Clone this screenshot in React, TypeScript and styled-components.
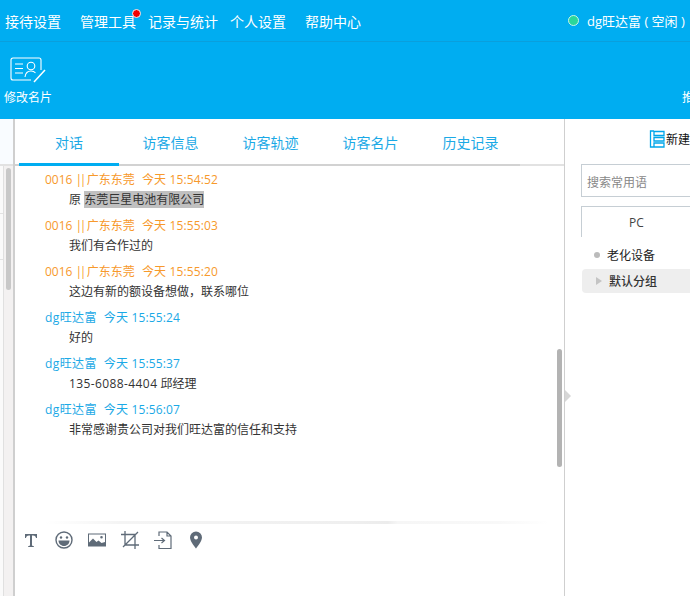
import React from "react";
import styled, { createGlobalStyle } from "styled-components";

const Global = createGlobalStyle`
  html, body { margin: 0; padding: 0; overflow: hidden; background: #fff; }
  body { font-family: "Open Sans", "Noto Sans CJK SC", sans-serif; font-size: 12px; }
  #root { width: 690px; height: 596px; overflow: hidden; }
`;

const Page = styled.div`
  width: 690px; height: 596px; display: flex; flex-direction: column; overflow: hidden;
`;
const TopBar = styled.header`
  height: 41px; flex: none; background: #00adf1; border-bottom: 1px solid #0a9fdc;
  display: flex; align-items: center; justify-content: space-between; padding: 0 0 0 5px; color: #fff; font-size: 14px;
`;
const Nav = styled.nav`display: flex; align-items: center; height: 100%;`;
const NavItem = styled.span<{ $w: number }>`
  position: relative; width: ${p => p.$w}px; white-space: nowrap;
`;
const Dot = styled.i`
  position: absolute; left: 52px; top: -2px; width: 7px; height: 7px; border-radius: 50%; background: #f10000;
  border: 1px solid #eaf6fc;
`;
const User = styled.div`display: flex; align-items: center; gap: 8px; white-space: nowrap; width: 122px; font-size: 13px;`;
const Status = styled.i`
  width: 9px; height: 9px; border-radius: 50%; background: #2bd69a; border: 1px solid #c8f5e8; flex: none;
`;
const Toolbar = styled.div`
  height: 77px; flex: none; background: #00adf1; color: #fff; display: flex; padding-left: 4px; justify-content: space-between; font-size: 12px;
`;
const Tool = styled.div`display: flex; flex-direction: column; align-items: center; width: 48px;`;
const ToolIcon = styled.svg`width: 36px; height: 26px; margin-top: 15px; margin-left: 0;`;
const ToolLabel = styled.span`margin-top: 6px; line-height: 17px; white-space: nowrap;`;
const EdgeLabel = styled.span`margin-top: 47px; line-height: 17px; width: 8px; overflow: hidden; white-space: nowrap;`;
const Body = styled.div`flex: 1; display: flex; min-height: 0; position: relative;`;
const Rail = styled.div`
  width: 13px; flex: none; background: #f3f1f1; border-right: 2px solid #cfcfcf; display: flex; flex-direction: column; position: relative;
`;
const RailHead = styled.div`height: 45px; flex: none; background: #f9fcff; border-bottom: 2px solid #e2e2e2;`;
const RailColumn = styled.div`
  width: 3px; flex: 1; background: #fafafa; border-right: 1px solid #e0e0e0; display: flex; flex-direction: column;
`;
const RailRow = styled.div<{ $h: number }>`height: ${p => p.$h}px; flex: none; border-bottom: 1px solid #e2e2e2;`;
const RailThumb = styled.div`
  position: absolute; left: 6px; top: 49px; width: 5px; height: 122px; background: #c8c8c8; border-radius: 3px;
`;
const Center = styled.div`flex: 1; min-width: 0; display: flex; flex-direction: column; position: relative;`;
const Tabs = styled.div`
  height: 45px; flex: none; display: flex; padding-left: 4px; border-bottom: 2px solid #d2d2d2;
  border-image: linear-gradient(90deg, #d2d2d2 504px, #e2e2e2 504px) 1;
`;
const Tab = styled.div<{ $active?: boolean }>`
  width: 100px; height: 47px; box-sizing: border-box; text-align: center; line-height: 47px; font-size: 14px; color: #1ba9e6;
  padding-left: ${p => (p.$active ? 0 : 3)}px;
  border-bottom: 3px solid ${p => (p.$active ? "#00adf1" : "transparent")};
`;
const Messages = styled.div`height: 350px; flex: none; padding: 5px 0 0 30px; position: relative; overflow: hidden;`;
const Msg = styled.div`height: 46px;`;
const Meta = styled.div<{ $me?: boolean }>`
  display: flex; gap: 7px; line-height: 18px; font-size: 12px; color: ${p => (p.$me ? "#1ba9e6" : "#f7992c")}; white-space: pre;
`;
const Who = styled.span<{ $me?: boolean }>`letter-spacing: ${p => (p.$me ? 0.4 : 0)}px;`;
const Pipes = styled.span`letter-spacing: -2.5px;`;
const Stamp = styled.span`letter-spacing: 0.15px;`;
const Text = styled.div`line-height: 22px; padding-left: 24px; font-size: 12px; color: #333; white-space: pre;`;
const Selected = styled.span`background: #c0c0c0;`;
const Phone = styled.span`letter-spacing: 0.4px;`;
const Thumb = styled.div`
  position: absolute; right: 2px; top: 183px; width: 5px; height: 118px; background: #b3b3b3; border-radius: 3px;
`;
const Divider = styled.div`
  margin: 0 15px 0 30px; height: 3px; flex: none;
  background: linear-gradient(90deg, #fff 0, #f4f4f4 15%, #efefef 60%, #ececec 68%, #f6f6f6 70%, #f8f8f8 90%, #fff 100%);
`;
const Icons = styled.div`display: flex; align-items: center; height: 32px; padding-left: 6px; gap: 13px; flex: none;`;
const IconBox = styled.svg`width: 20px; height: 20px; color: #5f6b78; flex: none;`;
const Right = styled.aside`
  width: 126px; flex: none; border-left: 1px solid #cfcfcf; padding-left: 16px; box-sizing: border-box; overflow: hidden;
`;
const Arrow = styled.i`
  position: absolute; left: 565px; top: 271px; width: 0; height: 0;
  border-left: 6px solid #d6d6d6; border-top: 6px solid transparent; border-bottom: 6px solid transparent;
`;
const NewRow = styled.div`
  height: 45px; display: flex; align-items: center; gap: 1px; padding-left: 68px; padding-bottom: 5px; box-sizing: border-box; white-space: nowrap; color: #111;
`;
const Search = styled.div`
  width: 130px; height: 33px; border: 1px solid #c6ced4; box-sizing: border-box; color: #888; padding-left: 5px; line-height: 35px; margin-bottom: 9px; white-space: nowrap;
`;
const PcTab = styled.div`
  width: 130px; height: 31px; border: 1px solid #c6ced4; border-bottom: 0; box-sizing: border-box; text-align: center; padding-right: 19px; line-height: 32px; color: #444; margin-bottom: 4px;
`;
const Group = styled.div`
  height: 28px; display: flex; align-items: center; gap: 7px; padding-left: 13px; color: #222; white-space: nowrap; box-sizing: border-box;
`;
const Bullet = styled.i`width: 6px; height: 6px; border-radius: 50%; background: #bbb; flex: none;`;
const GroupOpen = styled.div`
  width: 130px; height: 24px; background: #eee; border-radius: 4px; margin-left: 1px; display: flex; align-items: center; gap: 7px; padding-left: 14px; color: #333; font-weight: 500; white-space: nowrap; box-sizing: border-box;
`;
const Tri = styled.i`
  width: 0; height: 0; border-left: 6px solid #c4c4c4; border-top: 4px solid transparent; border-bottom: 4px solid transparent; flex: none;
`;

const Visitor = () => <>0016 <Pipes>||</Pipes> 广东东莞</>;

const msgs: { who: React.ReactNode; time: string; text: React.ReactNode; me?: boolean }[] = [
  { who: <Visitor />, time: "今天 15:54:52", text: <>原 <Selected>东莞巨星电池有限公司</Selected></> },
  { who: <Visitor />, time: "今天 15:55:03", text: "我们有合作过的" },
  { who: <Visitor />, time: "今天 15:55:20", text: "这边有新的额设备想做，联系哪位" },
  { who: "dg旺达富", time: "今天 15:55:24", text: "好的", me: true },
  { who: "dg旺达富", time: "今天 15:55:37", text: <><Phone>135-6088-4404</Phone> 邱经理</>, me: true },
  { who: "dg旺达富", time: "今天 15:56:07", text: "非常感谢贵公司对我们旺达富的信任和支持", me: true },
];

export default function App() {
  return (
    <Page>
      <Global />
      <TopBar>
        <Nav>
          <NavItem $w={75}>接待设置</NavItem>
          <NavItem $w={68}>管理工具<Dot /></NavItem>
          <NavItem $w={82}>记录与统计</NavItem>
          <NavItem $w={75}>个人设置</NavItem>
          <NavItem $w={60}>帮助中心</NavItem>
        </Nav>
        <User><Status />dg旺达富 ( 空闲 )</User>
      </TopBar>
      <Toolbar>
        <Tool>
          <ToolIcon viewBox="0 0 36 26" fill="none" stroke="#fff" strokeWidth="1.1">
            <path d="M31 13V3a2 2 0 0 0-2-2H3a2 2 0 0 0-2 2v18a2 2 0 0 0 2 2h18" />
            <path d="M5 7h8M5 11.500h8M5 16h8" />
            <circle cx="21" cy="9" r="3.800" />
            <path d="M15 20c.5-4 3-6 6-6 2 0 3.500.7 4.500 2" />
            <path d="M24 25 35 13" strokeWidth="1.500" />
          </ToolIcon>
          <ToolLabel>修改名片</ToolLabel>
        </Tool>
        <EdgeLabel>推送</EdgeLabel>
      </Toolbar>
      <Body>
        <Rail>
          <RailHead />
          <RailColumn>
            <RailRow $h={47} />
            <RailRow $h={45} />
          </RailColumn>
          <RailThumb />
        </Rail>
        <Center>
          <Tabs>
            <Tab $active>对话</Tab>
            <Tab>访客信息</Tab>
            <Tab>访客轨迹</Tab>
            <Tab>访客名片</Tab>
            <Tab>历史记录</Tab>
          </Tabs>
          <Messages>
            {msgs.map((m, i) => (
              <Msg key={i}>
                <Meta $me={m.me}><Who $me={m.me}>{m.who}</Who><Stamp>{m.time}</Stamp></Meta>
                <Text>{m.text}</Text>
              </Msg>
            ))}
            <Thumb />
          </Messages>
          <Divider />
          <Icons>
            <IconBox viewBox="0 0 20 20" fill="currentColor">
              <path d="M4 4h12v4h-1c-.3-1.600-.9-2.600-3-2.600h-1V15c0 .7.500 1 1.800 1v1H7.200v-1C8.500 16 9 15.700 9 15V5.400H8C5.900 5.400 5.300 6.400 5 8H4z" />
            </IconBox>
            <IconBox viewBox="0 0 20 20" fill="none" stroke="currentColor" strokeWidth="1.400">
              <circle cx="10" cy="10" r="8" />
              <circle cx="7" cy="7.500" r="1.200" fill="currentColor" stroke="none" />
              <circle cx="13" cy="7.500" r="1.200" fill="currentColor" stroke="none" />
              <path d="M4.500 10.500h11c0 3.200-2.500 5.500-5.500 5.500s-5.500-2.300-5.500-5.500z" fill="currentColor" stroke="none" />
            </IconBox>
            <IconBox viewBox="0 0 20 20" fill="currentColor">
              <path fillRule="evenodd" d="M1 3.500h18v13H1zM2 4.500v8l4-4 3.500 3.500 2-1.500 3 2.500 3.500-1V4.500zM14.500 6a1.300 1.300 0 1 1 0 2.600 1.300 1.300 0 0 1 0-2.600z" />
            </IconBox>
            <IconBox viewBox="0 0 20 20" fill="none" stroke="currentColor" strokeWidth="1.300">
              <path d="M1 4.500h14V19M5 1v14h14M3 17 18 2" />
            </IconBox>
            <IconBox viewBox="0 0 20 20" fill="none" stroke="currentColor" strokeWidth="1.200">
              <path d="M6 6V2h8l4 4v12.500H6V15M14 2v4h4M1 10.500h10M8.500 8l3 2.500-3 2.500" />
            </IconBox>
            <IconBox viewBox="0 0 20 20" fill="currentColor">
              <path fillRule="evenodd" d="M10 1.500a6 6 0 0 0-6 6c0 4 6 11 6 11s6-7 6-11a6 6 0 0 0-6-6zm0 4a2 2 0 1 1 0 4 2 2 0 0 1 0-4z" />
            </IconBox>
          </Icons>
        </Center>
        <Right>
          <NewRow>
            <svg width="16" height="18" viewBox="0 0 16 18" fill="none" stroke="#00a6ea" strokeWidth="1.300">
              <path d="M5 1H1.500v16H5M5 1.500h10v4H5zM5 7.500h10v3.500H5zM5 13h10v4H5z" />
            </svg>
            新建
          </NewRow>
          <Search>搜索常用语</Search>
          <PcTab>PC</PcTab>
          <Group><Bullet />老化设备</Group>
          <GroupOpen><Tri />默认分组</GroupOpen>
        </Right>
        <Arrow />
      </Body>
    </Page>
  );
}
